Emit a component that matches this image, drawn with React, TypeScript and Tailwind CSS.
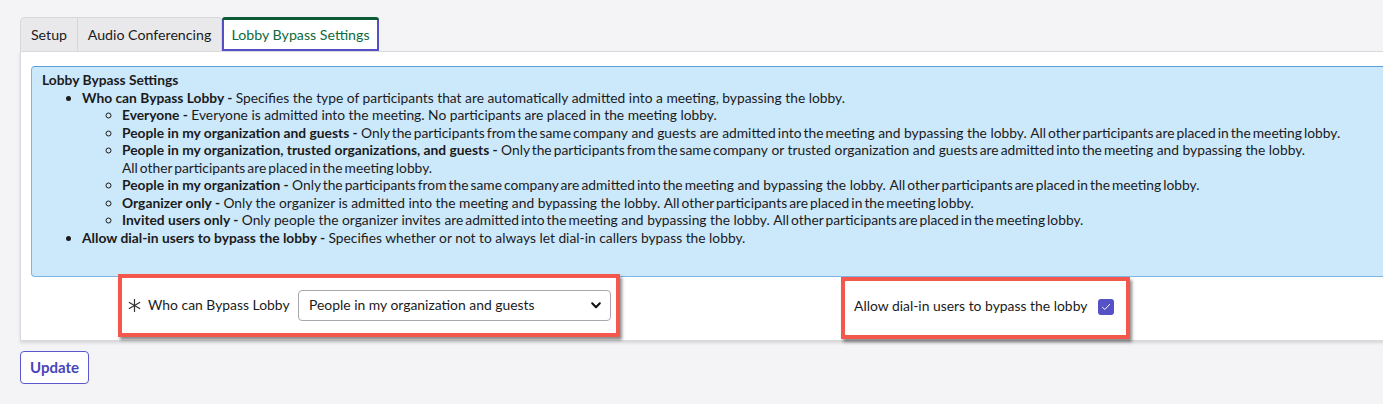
import React from "react";

const FONT = "font-['Lato','Noto_Sans',sans-serif]";

// tight word spacing, the way the reference text renders some runs
function T({ children }: { children: React.ReactNode }) {
  return <span className="[word-spacing:-0.11em]">{children}</span>;
}

function Item({ label, children }: { label: string; children: React.ReactNode }) {
  return (
    <li className="list-[circle]">
      <b className="font-bold">{label} - </b>
      {children}
    </li>
  );
}

export default function App() {
  return (
    <div className={`${FONT} h-[404px] w-full overflow-hidden bg-[#f4f4f6] text-[#1b1b1b]`}>
      <div className="w-[1420px] pl-[20px] pt-[17px]">
        {/* tabs */}
        <div className="flex h-[34px] items-stretch text-[14.2px]">
          <div className="flex w-[58px] items-center justify-center rounded-tl-[5px] border border-b-0 border-[#d6d6da] bg-[#e9e9ec]">
            Setup
          </div>
          <div className="flex w-[144px] items-center justify-center rounded-tr-[4px] border border-b-0 border-l-0 border-[#d6d6da] bg-[#e9e9ec]">
            Audio Conferencing
          </div>
          <div className="flex w-[157px] flex-col">
            <div className="h-[3px] rounded-t-[3px] bg-[#0b5a38]" />
            <div className="flex flex-1 items-center justify-center border-2 border-t-0 border-[#5450c4] bg-white text-[#0d6b40]">
              Lobby Bypass Settings
            </div>
          </div>
        </div>

        {/* card */}
        <div className="h-[290px] border border-[#dadade] bg-white px-[10px] pt-[14px] shadow-[0_2px_3px_rgba(0,0,0,0.12)]">
          <div className="h-[211px] rounded-[4px] border border-[#7db5e4] border-t-[#5d9fd8] bg-[#cce8fb] px-[10px] pt-[4px] text-[13.8px] leading-[17.5px]">
            <div className="font-bold">Lobby Bypass Settings</div>
            <ul className="list-disc whitespace-nowrap pl-[40px]">
              <li>
                <b className="font-bold">Who can Bypass Lobby - </b>
                Specifies the type of participants that are automatically admitted into a meeting, bypassing the lobby.
                <ul className="pl-[40px]">
                  <Item label="Everyone">
                    Everyone is admitted into the meeting. No participants are placed in the meeting lobby.
                  </Item>
                  <Item label="People in my organization and guests">
                    <T>Only the participants from the same company</T> and guests are <T>admitted into the meeting</T> and bypassing the lobby. <T>All other participants are placed in the meeting lobby.</T>
                  </Item>
                  <Item label="People in my organization, trusted organizations, and guests">
                    <T>Only the participants from the same company</T> or trusted organization and <T>guests are admitted into the meeting</T> and bypassing the lobby.
                    <br />
                    <T>All other participants are placed in the meeting lobby.</T>
                  </Item>
                  <Item label="People in my organization">
                    <T>Only the participants from the same company are admitted into the meeting</T> and bypassing the lobby. <T>All other participants are placed in the meeting lobby.</T>
                  </Item>
                  <Item label="Organizer only">
                    Only the organizer is admitted into the meeting and bypassing the lobby. <T>All other participants are placed in the meeting lobby.</T>
                  </Item>
                  <Item label="Invited users only">
                    Only people the organizer invites <T>are admitted into the meeting</T> and bypassing the lobby. <T>All other participants are placed in the meeting lobby.</T>
                  </Item>
                </ul>
              </li>
              <li>
                <b className="font-bold">Allow dial-in users to bypass the lobby - </b>
                Specifies whether or not to always let dial-in callers bypass the lobby.
              </li>
            </ul>
          </div>

          {/* form row */}
          <div className="mt-[-3px] flex items-start whitespace-nowrap text-[13.9px]">
            <div className="ml-[87px] flex h-[63px] w-[502px] shrink-0 items-center border-4 border-[#f4574b] bg-white pl-[6px] shadow-[2px_3px_3px_rgba(0,0,0,0.45)]">
              <svg width="13" height="13" viewBox="0 0 13 13" className="mr-[7px] shrink-0 text-[#333]">
                <g stroke="currentColor" strokeWidth="1.2" strokeLinecap="round">
                  <line x1="6.5" y1="0.5" x2="6.5" y2="12.5" />
                  <line x1="1.3" y1="3.5" x2="11.7" y2="9.5" />
                  <line x1="1.3" y1="9.5" x2="11.7" y2="3.5" />
                </g>
              </svg>
              <span className="w-[140px]">Who can Bypass Lobby</span>
              <div className="ml-[10px] flex h-[31px] w-[313px] shrink-0 items-center justify-between rounded-[4px] border border-[#a8a8ae] bg-white pl-[10px] pr-[9px]">
                <span>People in my organization and guests</span>
                <svg width="10" height="7" viewBox="0 0 10 7">
                  <path d="M1.2 1.3 L5 5.2 L8.8 1.3" fill="none" stroke="#111" strokeWidth="2" strokeLinecap="round" strokeLinejoin="round" />
                </svg>
              </div>
            </div>

            <div className="ml-[221px] mt-[3px] flex h-[62px] w-[289px] shrink-0 items-center border-4 border-[#f4574b] bg-white pb-[3px] pl-[9px] shadow-[2px_3px_3px_rgba(0,0,0,0.45)]">
              <span>Allow dial-in users to bypass the lobby</span>
              <div className="ml-[11px] flex h-[16px] w-[16px] shrink-0 items-center justify-center rounded-[3px] bg-[#5551c6]">
                <svg width="10" height="8" viewBox="0 0 10 8">
                  <path d="M1.5 4.3 L3.8 6.5 L8.6 1.4" fill="none" stroke="#fff" strokeWidth="1" strokeLinecap="round" strokeLinejoin="round" />
                </svg>
              </div>
            </div>
          </div>
        </div>

        {/* update */}
        <div className="mt-[10px] flex">
          <button className="h-[33px] w-[69px] rounded-[4px] border border-[#5b57cf] bg-white text-[15px] font-bold text-[#4844b8]">
            Update
          </button>
        </div>
      </div>
    </div>
  );
}
